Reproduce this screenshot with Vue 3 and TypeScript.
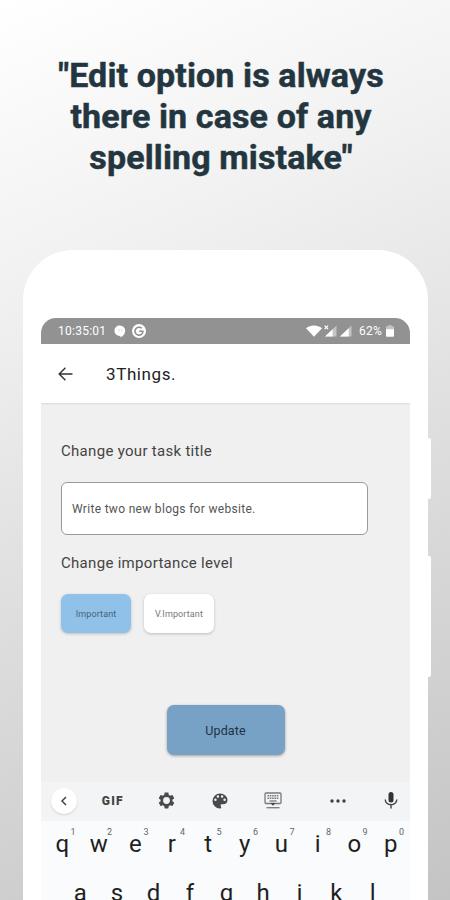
<script setup lang="ts">
interface Key {
  label: string
  hint?: string
}

const topRow: Key[] = [...'qwertyuiop'].map((label, i) => ({ label, hint: String((i + 1) % 10) }))
const homeRow: Key[] = [...'asdfghjkl'].map((label) => ({ label }))
</script>

<template>
  <main class="promo">
    <h1 class="headline">"Edit option is always<br />there in case of any<br />spelling mistake"</h1>

    <div class="phone">
      <span class="side power"></span>
      <span class="side volume"></span>
      <div class="screen">
        <div class="status">
          <span class="clock">10:35:01</span>
          <svg class="bubble" width="12" height="13" viewBox="0 0 12 13">
            <path d="M6 .5a5.2 5.2 0 0 1 5.2 5.2c0 2.900-2 5.300-4.700 6.800v-1.700A5.200 5.200 0 1 1 6 .5z" fill="#fff" />
            <path d="M4 4.400h1.600v1.500l-.8 1M6.700 4.400h1.500v1.500l-.8 1" stroke="#ddd" stroke-width=".7" fill="none" />
          </svg>
          <svg class="google" width="14" height="14" viewBox="0 0 14 14">
            <circle cx="7" cy="7" r="7" fill="#fff" />
            <path d="M9.800 4.300A4 4 0 1 0 11 7.200H7.200" fill="none" stroke="#8d8d8d" stroke-width="1.500" />
          </svg>
          <span class="grow"></span>
          <svg width="16" height="12" viewBox="0 0 16 12">
            <path d="M0 3.200C4.600-.5 11.400-.5 16 3.200L8 11.800z" fill="#fff" />
          </svg>
          <svg class="sim1" width="13" height="12" viewBox="0 0 13 12">
            <path d="M12.500.5v11H1z" fill="#c4c4c4" />
            <path d="M8.700 4.200v7.300H1z" fill="#fff" />
            <path d="M.7.700l3.300 3.300M4 .7L.7 4" stroke="#fff" stroke-width="1.200" />
          </svg>
          <svg class="sim2" width="12" height="12" viewBox="0 0 12 12">
            <path d="M11.500.5v11H0z" fill="#c4c4c4" />
            <path d="M8.700 3.200v8.300H0z" fill="#fff" />
          </svg>
          <span class="percent">62%</span>
          <svg class="battery" width="8" height="12" viewBox="0 0 8 12">
            <path d="M2.500 0h3v1.200h1.700q.8 0 .8.8v3H0V2q0-.8.800-.8h1.700z" fill="#c4c4c4" />
            <path d="M0 4.200h8V11q0 .8-.8.800H.8Q0 11.800 0 11z" fill="#fff" />
          </svg>
        </div>

        <header class="appbar">
          <svg width="15" height="14" viewBox="0 0 15 14" fill="none" stroke="#333" stroke-width="1.400">
            <path d="M14.500 7H1.300M7.400.8L1.200 7l6.200 6.200" />
          </svg>
          <span class="title">3Things.</span>
        </header>

        <section class="form">
          <label class="label">Change your task title</label>
          <div class="field">Write two new blogs for website.</div>
          <label class="label level">Change importance level</label>
          <div class="chips">
            <button class="chip active">Important</button>
            <button class="chip">V.Important</button>
          </div>
          <button class="update">Update</button>
        </section>

        <div class="tools">
          <span class="cell"><span class="collapse">
            <svg width="8" height="10" viewBox="0 0 8 10" fill="none" stroke="#444" stroke-width="1.500"><path d="M6 1L2 5l4 4" /></svg>
          </span></span>
          <span class="cell gif">GIF</span>
          <span class="cell">
            <svg width="19" height="19" viewBox="0 0 24 24" fill="#484a4d">
              <path fill-rule="evenodd" d="M19.430 12.980c.04-.32.070-.64.070-.98s-.03-.66-.07-.98l2.110-1.650c.19-.15.240-.42.120-.64l-2-3.460c-.12-.22-.39-.3-.61-.22l-2.490 1c-.52-.4-1.080-.73-1.690-.98l-.38-2.650C14.460 2.180 14.250 2 14 2h-4c-.25 0-.46.180-.49.420l-.38 2.650c-.61.250-1.170.59-1.690.98l-2.490-1c-.23-.09-.49 0-.61.220l-2 3.460c-.13.220-.07.490.12.640l2.110 1.650c-.04.320-.07.650-.07.980s.03.660.07.980l-2.110 1.650c-.19.150-.24.420-.12.640l2 3.460c.12.220.39.300.61.220l2.490-1c.52.400 1.080.730 1.690.980l.38 2.650c.03.240.24.420.49.420h4c.25 0 .46-.18.490-.42l.38-2.650c.61-.25 1.170-.59 1.690-.98l2.490 1c.23.090.49 0 .61-.22l2-3.460c.12-.22.070-.49-.12-.64zM12 16.300a4.300 4.300 0 1 1 0-8.600 4.300 4.300 0 0 1 0 8.600z" />
            </svg>
          </span>
          <span class="cell">
            <svg width="20" height="20" viewBox="0 0 24 24" fill="#484a4d">
              <path d="M12 3a9 9 0 0 0 0 18c.83 0 1.500-.67 1.500-1.500 0-.39-.15-.74-.39-1.010-.23-.26-.38-.61-.38-.99 0-.83.670-1.500 1.500-1.500H16c2.760 0 5-2.240 5-5 0-4.420-4.030-8-9-8zm-5.500 9a1.500 1.500 0 1 1 0-3 1.500 1.500 0 0 1 0 3zm3-4a1.500 1.500 0 1 1 0-3 1.500 1.500 0 0 1 0 3zm5 0a1.500 1.500 0 1 1 0-3 1.500 1.500 0 0 1 0 3zm3 4a1.500 1.500 0 1 1 0-3 1.500 1.500 0 0 1 0 3z" />
            </svg>
          </span>
          <span class="cell">
            <svg width="18" height="17" viewBox="0 0 18 17" fill="none" stroke="#77797c" stroke-width="1.300">
              <rect x="1" y="1" width="16" height="10.500" rx="1" />
              <path d="M3.500 3.800h11M3.500 6.300h11" stroke-dasharray="1.600 .7" stroke-width="1.500" />
              <path d="M5.500 9h7" />
              <path d="M6.500 11h5L9 13.800z" fill="#444" stroke="none" />
              <path d="M2.500 15.700h13" />
            </svg>
          </span>
          <span class="rule"></span>
          <span class="cell more">
            <svg width="16" height="4" viewBox="0 0 16 4" fill="#3d3f42"><circle cx="2" cy="2" r="1.700" /><circle cx="8" cy="2" r="1.700" /><circle cx="14" cy="2" r="1.700" /></svg>
          </span>
          <span class="cell mic">
            <svg width="14" height="17" viewBox="0 0 14 17">
              <rect x="4.500" y="0" width="5" height="10.500" rx="2.500" fill="#333" />
              <path d="M1.200 7.500a5.800 5.200 0 0 0 11.600 0M7 12.800v3.700" fill="none" stroke="#444" stroke-width="1.400" />
            </svg>
          </span>
        </div>

        <div class="keyboard">
          <div class="row">
            <span v-for="key in topRow" :key="key.label" class="key">
              {{ key.label }}<sup class="hint">{{ key.hint }}</sup>
            </span>
          </div>
          <div class="row home">
            <span v-for="key in homeRow" :key="key.label" class="key">{{ key.label }}</span>
          </div>
        </div>
      </div>
    </div>
  </main>
</template>

<style>
body {
  margin: 0;
  overflow: hidden;
}
</style>

<style scoped>
* {
  box-sizing: border-box;
}
.promo {
  width: 450px;
  height: 900px;
  overflow: hidden;
  font-family: Roboto, "Liberation Sans", sans-serif;
  background: linear-gradient(157deg, #fff 0%, #f1f1f1 27%, #dedede 57%, #c4c4c4 100%);
}
.headline {
  margin: 0 8px 0 0;
  padding-top: 55px;
  height: 250px;
  text-align: center;
  font-size: 34px;
  line-height: 41px;
  font-weight: 700;
  letter-spacing: 0.12px;
  -webkit-text-stroke: 0.5px #233640;
  color: #233640;
}
.phone {
  position: relative;
  width: 405px;
  height: 700px;
  margin-left: 23px;
  padding: 68px 18px 0;
  background: #fff;
  border-radius: 50px 50px 0 0;
}
.side {
  position: absolute;
  left: 404px;
  width: 4px;
  background: #fff;
  border-radius: 0 2px 2px 0;
}
.power {
  top: 188px;
  height: 61px;
}
.volume {
  top: 306px;
  height: 121px;
}
.screen {
  width: 369px;
  border-radius: 15px 15px 0 0;
  overflow: hidden;
}
.status {
  display: flex;
  align-items: center;
  height: 26px;
  padding: 0 16px 0 17px;
  background: #929292;
  color: #fff;
  font-size: 12px;
}
.clock {
  letter-spacing: 0.25px;
}
.bubble {
  margin-left: 8px;
}
.google {
  margin-left: 6px;
}
.grow {
  flex: 1;
}
.sim1 {
  margin-left: 2px;
}
.sim2 {
  margin-left: 3px;
}
.percent {
  margin-left: 7px;
  letter-spacing: 0.2px;
}
.battery {
  margin-left: 4px;
}
.appbar {
  position: relative;
  display: flex;
  align-items: center;
  height: 59px;
  padding-left: 17px;
  background: #fff;
  box-shadow: 0 1px 2px rgba(0, 0, 0, 0.1);
}
.title {
  margin-left: 33px;
  font-size: 17px;
  letter-spacing: 0.6px;
  color: #222;
}
.form {
  display: flex;
  flex-direction: column;
  align-items: flex-start;
  height: 379px;
  padding: 38px 20px 0;
  background: #f0f0f0;
}
.label {
  height: 20px;
  line-height: 20px;
  font-size: 15px;
  letter-spacing: 0.3px;
  color: #444;
}
.field {
  width: 307px;
  height: 53px;
  margin: 21px 0 18px;
  padding-left: 10px;
  line-height: 52px;
  font-size: 12px;
  letter-spacing: 0.31px;
  color: #555;
  background: #fff;
  border: 1px solid #9a9a9a;
  border-radius: 6px;
}
.chips {
  display: flex;
  gap: 13px;
  margin-top: 21px;
}
.chip {
  width: 70px;
  height: 39px;
  padding: 0;
  border: 0;
  border-radius: 7px;
  background: #fff;
  font-family: inherit;
  font-size: 9px;
  letter-spacing: 0.12px;
  color: #777;
  box-shadow: 0 1px 3px rgba(0, 0, 0, 0.22);
}
.chip.active {
  background: #90c1e9;
  color: #4a6275;
}
.update {
  align-self: center;
  width: 118px;
  height: 50px;
  margin-top: 72px;
  padding: 0;
  border: 0;
  border-radius: 7px;
  background: #78a1c6;
  font-family: inherit;
  font-size: 12.500px;
  letter-spacing: 0.15px;
  color: #203345;
  box-shadow: 0 1px 3px rgba(0, 0, 0, 0.35);
}
.tools {
  display: flex;
  align-items: center;
  height: 39px;
  padding: 0 0 2px 8px;
  background: #f2f4f5;
}
.cell {
  display: flex;
  flex: none;
  justify-content: center;
  width: 53.500px;
}
.cell:first-child {
  width: 30px;
  margin-right: 7px;
}
.collapse {
  display: flex;
  flex: none;
  align-items: center;
  justify-content: center;
  width: 26px;
  height: 26px;
  border-radius: 50%;
  background: #fff;
  box-shadow: 0 1px 2px rgba(0, 0, 0, 0.15);
}
.gif {
  font-size: 12px;
  font-weight: 900;
  letter-spacing: 1.200px;
  color: #444;
}
.rule {
  width: 1px;
  height: 20px;
  margin-left: 6px;
  background: #dfe1e3;
}
.more {
  margin-left: 5px;
}
.keyboard {
  height: 90px;
  background: #f9fbfc;
}
.row {
  display: flex;
  padding: 0 1px 0 3px;
}
.row.home {
  padding: 0 19px 0 21px;
}
.key {
  position: relative;
  flex: 1;
  height: 49px;
  line-height: 47px;
  text-align: center;
  font-size: 24px;
  color: #1f1f1f;
}
.hint {
  position: absolute;
  top: 5px;
  right: 5px;
  font-size: 9px;
  line-height: 12px;
  color: #666;
}
</style>
